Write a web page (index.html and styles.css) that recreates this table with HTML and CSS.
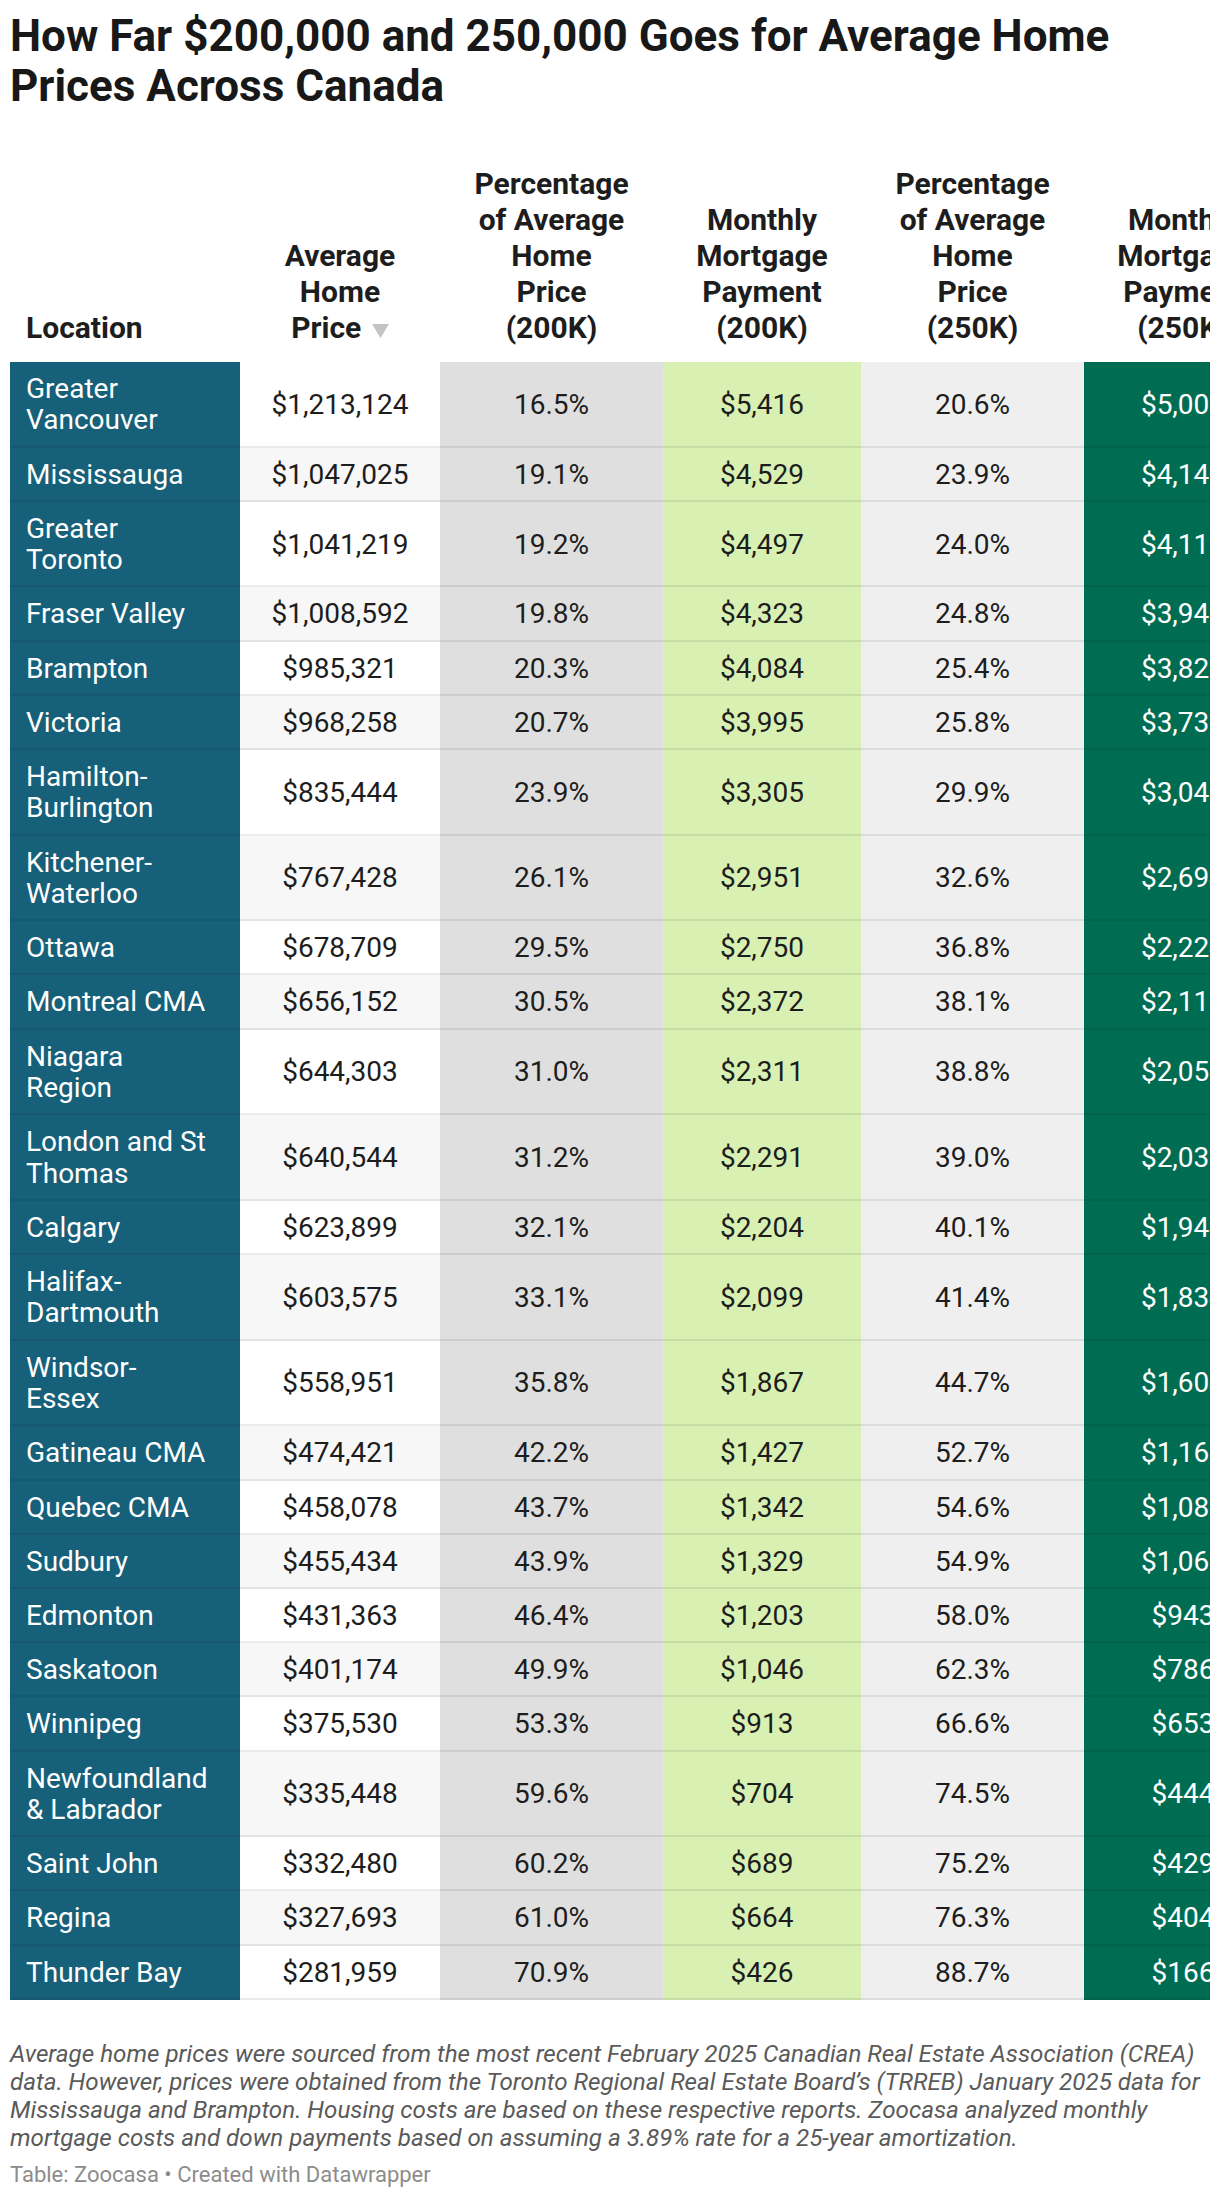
FILE: index.html
```html
<!DOCTYPE html>
<html lang="en">
<head>
<meta charset="utf-8">
<title>How Far $200,000 and 250,000 Goes for Average Home Prices Across Canada</title>
<link rel="stylesheet" href="styles.css">
</head>
<body>
<div class="chart">
  <h1 class="title">How Far $200,000 and 250,000 Goes for Average Home Prices Across Canada</h1>
  <div class="table-wrap">
    <table class="data">
      <colgroup>
        <col class="c-loc"><col class="c-price"><col class="c-pct"><col class="c-pay"><col class="c-pct"><col class="c-pay">
      </colgroup>
      <thead>
        <tr>
          <th class="h-loc">Location</th>
          <th>Average<br>Home<br>Price <svg class="sort" width="17" height="14" viewBox="0 0 17 14"><polygon points="0,0 17,0 8.5,14" fill="#c4c4c4"/></svg></th>
          <th>Percentage<br>of Average<br>Home<br>Price<br>(200K)</th>
          <th>Monthly<br>Mortgage<br>Payment<br>(200K)</th>
          <th>Percentage<br>of Average<br>Home<br>Price<br>(250K)</th>
          <th>Monthly<br>Mortgage<br>Payment<br>(250K)</th>
        </tr>
      </thead>
      <tbody>
        <tr><td class="loc">Greater Vancouver</td><td class="price">$1,213,124</td><td class="pct2">16.5%</td><td class="pay2">$5,416</td><td class="pct25">20.6%</td><td class="pay25">$5,003</td></tr>
        <tr><td class="loc">Mississauga</td><td class="price">$1,047,025</td><td class="pct2">19.1%</td><td class="pay2">$4,529</td><td class="pct25">23.9%</td><td class="pay25">$4,146</td></tr>
        <tr><td class="loc">Greater Toronto</td><td class="price">$1,041,219</td><td class="pct2">19.2%</td><td class="pay2">$4,497</td><td class="pct25">24.0%</td><td class="pay25">$4,115</td></tr>
        <tr><td class="loc">Fraser Valley</td><td class="price">$1,008,592</td><td class="pct2">19.8%</td><td class="pay2">$4,323</td><td class="pct25">24.8%</td><td class="pay25">$3,941</td></tr>
        <tr><td class="loc">Brampton</td><td class="price">$985,321</td><td class="pct2">20.3%</td><td class="pay2">$4,084</td><td class="pct25">25.4%</td><td class="pay25">$3,829</td></tr>
        <tr><td class="loc">Victoria</td><td class="price">$968,258</td><td class="pct2">20.7%</td><td class="pay2">$3,995</td><td class="pct25">25.8%</td><td class="pay25">$3,733</td></tr>
        <tr><td class="loc">Hamilton-Burlington</td><td class="price">$835,444</td><td class="pct2">23.9%</td><td class="pay2">$3,305</td><td class="pct25">29.9%</td><td class="pay25">$3,046</td></tr>
        <tr><td class="loc">Kitchener-Waterloo</td><td class="price">$767,428</td><td class="pct2">26.1%</td><td class="pay2">$2,951</td><td class="pct25">32.6%</td><td class="pay25">$2,694</td></tr>
        <tr><td class="loc">Ottawa</td><td class="price">$678,709</td><td class="pct2">29.5%</td><td class="pay2">$2,750</td><td class="pct25">36.8%</td><td class="pay25">$2,224</td></tr>
        <tr><td class="loc">Montreal CMA</td><td class="price">$656,152</td><td class="pct2">30.5%</td><td class="pay2">$2,372</td><td class="pct25">38.1%</td><td class="pay25">$2,118</td></tr>
        <tr><td class="loc">Niagara Region</td><td class="price">$644,303</td><td class="pct2">31.0%</td><td class="pay2">$2,311</td><td class="pct25">38.8%</td><td class="pay25">$2,059</td></tr>
        <tr><td class="loc">London and St Thomas</td><td class="price">$640,544</td><td class="pct2">31.2%</td><td class="pay2">$2,291</td><td class="pct25">39.0%</td><td class="pay25">$2,036</td></tr>
        <tr><td class="loc">Calgary</td><td class="price">$623,899</td><td class="pct2">32.1%</td><td class="pay2">$2,204</td><td class="pct25">40.1%</td><td class="pay25">$1,944</td></tr>
        <tr><td class="loc">Halifax-Dartmouth</td><td class="price">$603,575</td><td class="pct2">33.1%</td><td class="pay2">$2,099</td><td class="pct25">41.4%</td><td class="pay25">$1,834</td></tr>
        <tr><td class="loc">Windsor-<br>Essex</td><td class="price">$558,951</td><td class="pct2">35.8%</td><td class="pay2">$1,867</td><td class="pct25">44.7%</td><td class="pay25">$1,604</td></tr>
        <tr><td class="loc">Gatineau CMA</td><td class="price">$474,421</td><td class="pct2">42.2%</td><td class="pay2">$1,427</td><td class="pct25">52.7%</td><td class="pay25">$1,169</td></tr>
        <tr><td class="loc">Quebec CMA</td><td class="price">$458,078</td><td class="pct2">43.7%</td><td class="pay2">$1,342</td><td class="pct25">54.6%</td><td class="pay25">$1,085</td></tr>
        <tr><td class="loc">Sudbury</td><td class="price">$455,434</td><td class="pct2">43.9%</td><td class="pay2">$1,329</td><td class="pct25">54.9%</td><td class="pay25">$1,067</td></tr>
        <tr><td class="loc">Edmonton</td><td class="price">$431,363</td><td class="pct2">46.4%</td><td class="pay2">$1,203</td><td class="pct25">58.0%</td><td class="pay25">$943</td></tr>
        <tr><td class="loc">Saskatoon</td><td class="price">$401,174</td><td class="pct2">49.9%</td><td class="pay2">$1,046</td><td class="pct25">62.3%</td><td class="pay25">$786</td></tr>
        <tr><td class="loc">Winnipeg</td><td class="price">$375,530</td><td class="pct2">53.3%</td><td class="pay2">$913</td><td class="pct25">66.6%</td><td class="pay25">$653</td></tr>
        <tr><td class="loc">Newfoundland &amp; Labrador</td><td class="price">$335,448</td><td class="pct2">59.6%</td><td class="pay2">$704</td><td class="pct25">74.5%</td><td class="pay25">$444</td></tr>
        <tr><td class="loc">Saint John</td><td class="price">$332,480</td><td class="pct2">60.2%</td><td class="pay2">$689</td><td class="pct25">75.2%</td><td class="pay25">$429</td></tr>
        <tr><td class="loc">Regina</td><td class="price">$327,693</td><td class="pct2">61.0%</td><td class="pay2">$664</td><td class="pct25">76.3%</td><td class="pay25">$404</td></tr>
        <tr><td class="loc">Thunder Bay</td><td class="price">$281,959</td><td class="pct2">70.9%</td><td class="pay2">$426</td><td class="pct25">88.7%</td><td class="pay25">$166</td></tr>
      </tbody>
    </table>
  </div>
  <p class="notes">Average home prices were sourced from the most recent February 2025 Canadian Real Estate Association (CREA) data. However, prices were obtained from the Toronto Regional Real Estate Board’s (TRREB) January 2025 data for Mississauga and Brampton. Housing costs are based on these respective reports. Zoocasa analyzed monthly mortgage costs and down payments based on assuming a 3.89% rate for a 25-year amortization.</p>
  <p class="byline">Table: Zoocasa • Created with Datawrapper</p>
</div>
</body>
</html>
```
FILE: styles.css
```css
html, body {
  margin: 0;
  padding: 0;
  background: #ffffff;
}

body {
  font-family: Roboto, "Liberation Sans", Arial, sans-serif;
  color: #1d1d1d;
}

.chart {
  padding: 11px 10px 0 10px;
}

.title {
  margin: 0 0 55px 0;
  font-size: 44px;
  line-height: 50px;
  font-weight: 700;
  color: #181818;
}

.table-wrap {
  overflow: hidden;
  width: 1200px;
}

.data {
  border-collapse: separate;
  border-spacing: 0;
  table-layout: fixed;
  width: 1272px;
}

.c-loc { width: 230px; }
.c-price { width: 200px; }
.c-pct { width: 223px; }
.c-pay { width: 198px; }

.data th {
  font-size: 30px;
  line-height: 36px;
  font-weight: 700;
  color: #1d1d1d;
  text-align: center;
  vertical-align: bottom;
  padding: 0 8px 16px 8px;
}

.data th.h-loc {
  text-align: left;
  padding-left: 16px;
}

.sort {
  vertical-align: baseline;
  margin-left: 3px;
}

.data td {
  font-size: 28px;
  line-height: 31.4px;
  padding: 11px 10px 9.8px 10px;
  text-align: center;
  vertical-align: middle;
  border-bottom: 2px solid rgba(0, 0, 0, 0.08);
  color: #1d1d1d;
}

.data td.loc {
  text-align: left;
  padding-left: 16px;
  padding-right: 26px;
  background: #176079;
  color: #ffffff;
}

.data td.price { background: #ffffff; }
.data tbody tr:nth-child(even) td.price { background: #f7f7f7; }
.data td.pct2 { background: #dfdfdf; }
.data td.pay2 { background: #d9f0b3; }
.data td.pct25 { background: #efefef; }
.data td.pay25 {
  background: #006d52;
  color: #ffffff;
}

.notes {
  margin: 40px 0 0 0;
  font-size: 24.2px;
  line-height: 28px;
  font-style: italic;
  color: #5a5a5a;
}

.byline {
  margin: 9px 0 0 0;
  font-size: 22px;
  line-height: 28px;
  color: #8c8c8c;
}
```
